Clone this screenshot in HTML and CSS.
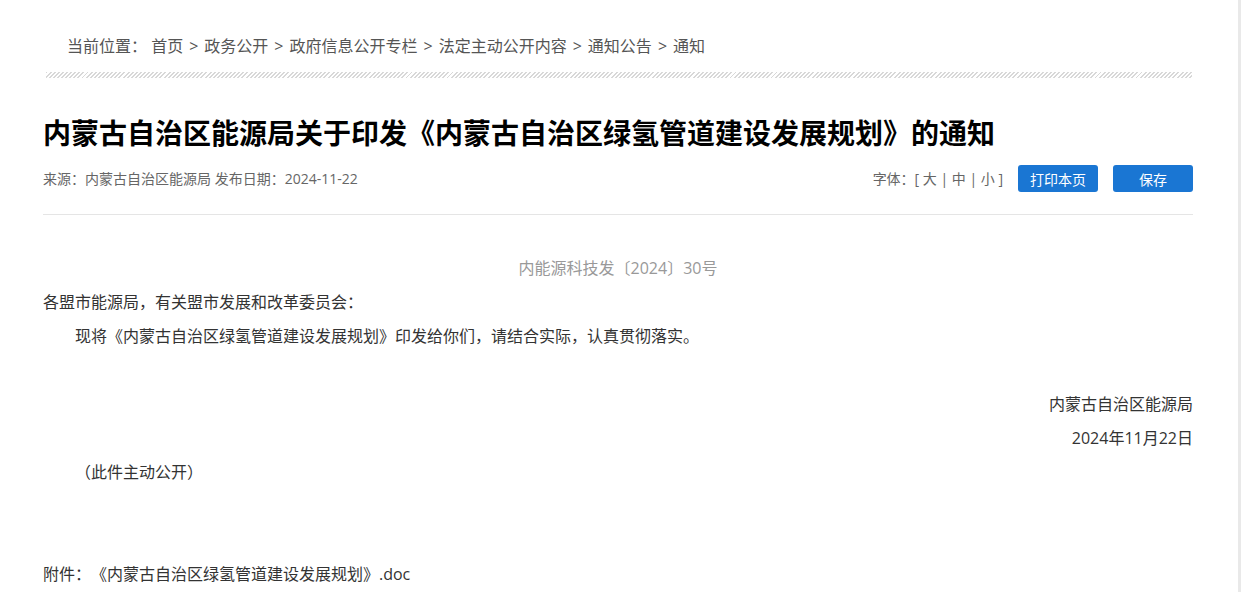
FILE: index.html
```html
<!DOCTYPE html>
<html lang="zh-CN">
<head>
<meta charset="utf-8">
<title>内蒙古自治区能源局关于印发《内蒙古自治区绿氢管道建设发展规划》的通知</title>
<link rel="stylesheet" href="styles.css">
</head>
<body>
<div class="page">
  <div class="container">
    <div class="crumbs">当前位置：&nbsp;<a>首页</a><span class="sep">&gt;</span><a>政务公开</a><span class="sep">&gt;</span><a>政府信息公开专栏</a><span class="sep">&gt;</span><a>法定主动公开内容</a><span class="sep">&gt;</span><a>通知公告</a><span class="sep">&gt;</span><a>通知</a></div>
    <div class="hatch"></div>
    <h1 class="title">内蒙古自治区能源局关于印发《内蒙古自治区绿氢管道建设发展规划》的通知</h1>
    <div class="meta">
      <div class="meta-left">来源：内蒙古自治区能源局 发布日期：2024-11-22</div>
      <div class="meta-right">
        <span class="fontsize">字体：[ <a>大</a> | <a>中</a> | <a>小</a> ]</span>
        <button class="btn">打印本页</button>
        <button class="btn">保存</button>
      </div>
    </div>
    <div class="article">
      <p class="center gray">内能源科技发〔2024〕30号</p>
      <p>各盟市能源局，有关盟市发展和改革委员会：</p>
      <p class="indent">现将《内蒙古自治区绿氢管道建设发展规划》印发给你们，请结合实际，认真贯彻落实。</p>
      <p>&nbsp;</p>
      <p class="right">内蒙古自治区能源局</p>
      <p class="right">2024年11月22日</p>
      <p class="indent">（此件主动公开）</p>
      <p>&nbsp;</p>
      <p>&nbsp;</p>
      <p>附件：《内蒙古自治区绿氢管道建设发展规划》.doc</p>
    </div>
  </div>
</div>
</body>
</html>
```

FILE: styles.css
```css
html, body {
  margin: 0;
  padding: 0;
  background: #fff;
}
body {
  font-family: "Open Sans", "Noto Sans CJK SC", "Noto Sans", sans-serif;
  color: #333;
  overflow: hidden;
  text-spacing-trim: space-all;
}
.page {
  width: 1238px;
  min-height: 592px;
  border-right: 3px solid #e9e9e9;
}
.container {
  width: 1150px;
  margin-left: 43px;
}
.crumbs {
  padding-top: 34px;
  padding-left: 24px;
  font-size: 16px;
  line-height: 24px;
  color: #555;
}
.crumbs a {
  color: #555;
}
.crumbs .sep {
  padding: 0 6px;
}
.hatch {
  margin: 14px 1px 0 3px;
  height: 6px;
  background: repeating-linear-gradient(135deg, #d8d8d8 0 1.4px, #fff 1.4px 2.9px);
}
.title {
  margin: 35px 0 0;
  font-size: 28px;
  line-height: 40px;
  font-weight: bold;
  color: #000;
}
.meta {
  margin-top: 12px;
  display: flex;
  align-items: center;
  justify-content: space-between;
  height: 27px;
  padding-bottom: 22px;
  border-bottom: 1px solid #e5e5e5;
}
.meta-left {
  font-size: 14px;
  line-height: 20px;
  color: #666;
}
.meta-right {
  display: flex;
  align-items: center;
  gap: 15px;
}
.fontsize {
  font-size: 14px;
  line-height: 20px;
  color: #666;
}
.btn {
  width: 80px;
  height: 27px;
  border: 0;
  border-radius: 3px;
  background: #1a76d3;
  color: #fff;
  font-family: inherit;
  font-size: 14px;
  padding: 0;
}
.article {
  padding-top: 36px;
}
.article p {
  margin: 0;
  font-size: 16px;
  line-height: 34px;
  color: #333;
}
.article .center { text-align: center; }
.article .right { text-align: right; }
.article .gray { color: #999; }
.article .indent { text-indent: 2em; }
```
